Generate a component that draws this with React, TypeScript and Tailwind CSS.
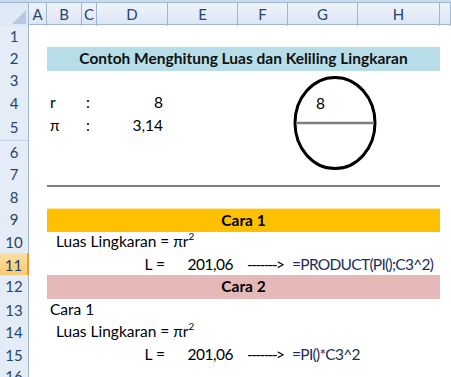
import React from "react";

const grid =
  "grid grid-cols-[29px_18px_35px_15px_71px_70px_50px_70px_82px_11px]";

const RowHead = ({ n, active }: { n: number; active?: boolean }) => (
  <div
    className={
      active
        ? "flex items-center justify-center bg-gradient-to-b from-[#fbe0a6] to-[#f7c96a] border-r-2 border-r-[#f29536] border-b border-b-[#e8a83c] text-[15px] text-[#1f3a5f]"
        : "flex items-center justify-center bg-[#e4ecf7] border-r border-r-[#9eb6ce] border-b border-b-[#c3d3e8] text-[15px] text-[#27446b]"
    }
  >
    {n}
  </div>
);

function Row({
  n,
  h,
  active,
  children,
}: {
  n: number;
  h: string;
  active?: boolean;
  children?: React.ReactNode;
}) {
  return (
    <div className={`${grid} ${h}`}>
      <RowHead n={n} active={active} />
      {children}
    </div>
  );
}

const cols = ["A", "B", "C", "D", "E", "F", "G", "H", ""];

// Luas Lingkaran = πr² (superscript kept inside one inline span)
const Luas = () => (
  <span>
    Luas Lingkaran = πr<sup className="text-[10px] -top-[7px]">2</sup>
  </span>
);

export default function App() {
  return (
    <div
      className="relative w-[451px] h-[377px] overflow-hidden bg-white text-[15.5px] text-black"
      style={{ fontFamily: "Lato, 'Open Sans', sans-serif" }}
    >
      {/* formula bar edge */}
      <div className="h-[3px] bg-[#c9d9ee] border-b border-b-[#9eb6ce]" />

      {/* column headers */}
      <div className={`${grid} h-[22px] bg-gradient-to-b from-[#eef3fa] to-[#dce6f4] border-b border-b-[#9eb6ce] text-[15px] text-[#27446b]`}>
        <div className="relative bg-[#dfe8f5] border-r border-r-[#9eb6ce]">
          <div className="absolute right-[2px] bottom-[2px] w-0 h-0 border-l-[14px] border-l-transparent border-b-[14px] border-b-[#b4c8e2]" />
        </div>
        {cols.map((c, i) => (
          <div
            key={i}
            className="flex items-center justify-center border-r border-r-[#9eb6ce]"
          >
            {c}
          </div>
        ))}
      </div>

      <Row n={1} h="h-[22px]" />
      <Row n={2} h="h-[22px]">
        <div className="col-start-3 col-end-10 flex items-center justify-center bg-[#b7dee8] font-bold text-[#111]">
          Contoh Menghitung Luas dan Keliling Lingkaran
        </div>
      </Row>
      <Row n={3} h="h-[22px]" />
      <Row n={4} h="h-[23px]">
        <div className="col-start-3 flex items-end pb-[2px] pl-[3px]">r</div>
        <div className="col-start-4 flex items-end pb-[2px] pl-[4px]">:</div>
        <div className="col-start-5 flex items-end justify-end pb-[2px] pr-[5px]">8</div>
      </Row>
      <Row n={5} h="h-[27px]">
        <div className="col-start-3 flex items-end pb-[4px] pl-[3px]">π</div>
        <div className="col-start-4 flex items-end pb-[4px] pl-[4px]">:</div>
        <div className="col-start-5 flex items-end justify-end pb-[4px] pr-[5px]">3,14</div>
      </Row>
      <Row n={6} h="h-[22px]" />
      <Row n={7} h="h-[23px]">
        <div className="col-start-3 col-end-10 flex items-end">
          <div className="w-full h-[2px] bg-[#7f7f7f]" />
        </div>
      </Row>
      <Row n={8} h="h-[22px]" />
      <Row n={9} h="h-[22px]">
        <div className="col-start-3 col-end-10 flex items-center justify-center bg-[#ffc000] border-t border-t-[#fde9a8] font-bold">
          Cara 1
        </div>
      </Row>
      <Row n={10} h="h-[23px]">
        <div className="col-start-3 col-end-8 flex items-end pb-[2px] pl-[9px] whitespace-nowrap">
          <Luas />
        </div>
      </Row>
      <Row n={11} h="h-[22px]" active>
        <div className="col-start-5 flex items-end justify-end pb-[2px] pr-[3px] whitespace-nowrap">L =</div>
        <div className="col-start-6 flex items-end justify-end pb-[2px] pr-[5px] tracking-[-0.5px]">201,06</div>
        <div className="col-start-7 flex items-end pb-[2px] pl-[9px] whitespace-nowrap tracking-[-1.6px]">-------&gt;</div>
        <div className="col-start-8 col-end-10 flex items-end pb-[2px] pl-[4px] whitespace-nowrap tracking-[-0.7px] text-[#1b2f5a]">
          =PRODUCT(PI();C3^2)
        </div>
      </Row>
      <Row n={12} h="h-[23px]">
        <div className="col-start-3 col-end-10 flex items-center justify-center bg-[#e6b9b8] font-bold">
          Cara 2
        </div>
      </Row>
      <Row n={13} h="h-[22px]">
        <div className="col-start-3 col-end-6 flex items-end pb-[2px] pl-[3px]">Cara 1</div>
      </Row>
      <Row n={14} h="h-[23px]">
        <div className="col-start-3 col-end-8 flex items-end pb-[2px] pl-[9px] whitespace-nowrap">
          <Luas />
        </div>
      </Row>
      <Row n={15} h="h-[22px]">
        <div className="col-start-5 flex items-end justify-end pb-[2px] pr-[3px] whitespace-nowrap">L =</div>
        <div className="col-start-6 flex items-end justify-end pb-[2px] pr-[5px] tracking-[-0.5px]">201,06</div>
        <div className="col-start-7 flex items-end pb-[2px] pl-[9px] whitespace-nowrap tracking-[-1.6px]">-------&gt;</div>
        <div className="col-start-8 col-end-10 flex items-end pb-[2px] pl-[4px] whitespace-nowrap tracking-[-0.7px] text-[#1b2f5a]">
          =PI()*C3^2
        </div>
      </Row>
      <Row n={16} h="h-[22px]" />

      {/* circle drawing shape */}
      <div className="absolute left-[293px] top-[76px] w-[84px] h-[94px]">
        <svg width="84" height="94" viewBox="0 0 84 94">
          <ellipse cx="42" cy="47" rx="40" ry="45.5" fill="white" stroke="black" strokeWidth="3" />
          <line x1="3" y1="47" x2="81" y2="47" stroke="#7f7f7f" strokeWidth="2.5" />
        </svg>
        <span className="absolute left-[23px] top-[20px] leading-none">8</span>
      </div>
    </div>
  );
}
